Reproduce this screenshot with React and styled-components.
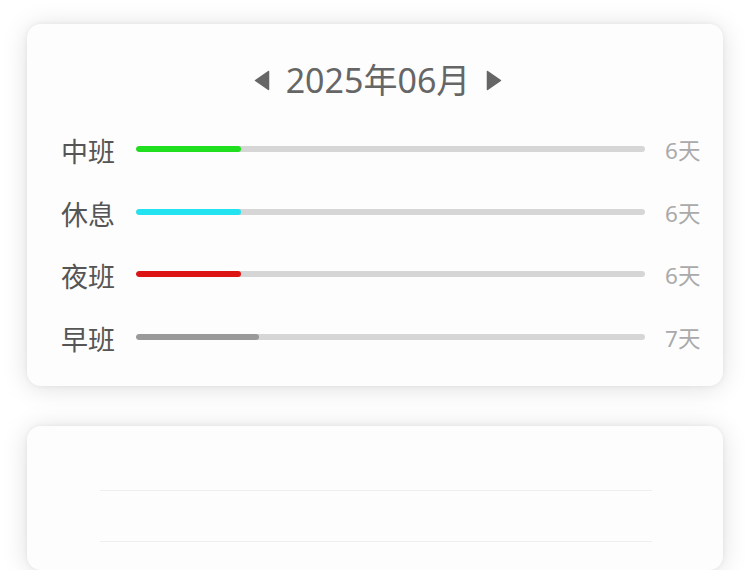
import React from "react";
import styled, { createGlobalStyle } from "styled-components";

const Global = createGlobalStyle`
  html, body { margin: 0; padding: 0; background: #ffffff; }
  body { font-family: "Noto Sans", "Noto Sans CJK SC", sans-serif; }
`;

const Page = styled.div`
  display: flex;
  flex-direction: column;
  gap: 40px;
  padding: 24px 27px 0 27px;
  height: 570px;
  box-sizing: border-box;
  overflow: hidden;
`;

const Card = styled.div`
  background: #fdfdfd;
  border-radius: 14px;
  box-shadow: 0 2px 26px rgba(0, 0, 0, 0.13), 0 0 5px rgba(0, 0, 0, 0.06);
  box-sizing: border-box;
`;

const StatsCard = styled(Card)`
  padding: 36px 22px 18px 34px;
  display: flex;
  flex-direction: column;
`;

const MonthBar = styled.div`
  display: flex;
  align-items: center;
  justify-content: center;
  gap: 16px;
  height: 40px;
  margin-bottom: 18px;
  margin-right: 6px;
`;

const Arrow = styled.button`
  border: none;
  background: none;
  padding: 0;
  display: flex;
  align-items: center;
  cursor: pointer;
  color: #666;
`;

const MonthText = styled.div`
  font-family: "Noto Sans", "Noto Sans CJK SC", sans-serif;
  font-size: 34px;
  line-height: 40px;
  color: #666;
`;

const Row = styled.div`
  display: flex;
  align-items: center;
  height: 62.5px;
`;

const Label = styled.div`
  width: 54px;
  margin-right: 21px;
  font-family: "Noto Sans CJK SC", sans-serif;
  font-size: 27px;
  line-height: 32px;
  color: #555;
  transform: translateY(2px);
  flex-shrink: 0;
`;

const Track = styled.div`
  flex: 1;
  height: 6px;
  border-radius: 3px;
  background: #d6d6d6;
  overflow: hidden;
`;

const Fill = styled.div`
  height: 100%;
  border-radius: 3px;
  background: ${(p) => p.$color};
`;

const Value = styled.div`
  margin-left: 20px;
  width: 36px;
  font-family: "Noto Sans", "Noto Sans CJK SC", sans-serif;
  font-size: 22.5px;
  line-height: 26px;
  color: #aaa;
  transform: translateY(2px);
  flex-shrink: 0;
  white-space: nowrap;
`;

const ChartCard = styled(Card)`
  height: 300px;
  padding: 64px 71px 0 73px;
  display: flex;
  flex-direction: column;
  gap: 50px;
`;

const GridLine = styled.div`
  height: 1px;
  background: #efefef;
`;

const Tri = ({ dir }) => (
  <svg width="16" height="21" viewBox="0 0 16 21">
    <polygon
      points={dir === "left" ? "14.5,1.5 14.5,19.5 1.5,10.5" : "1.5,1.5 1.5,19.5 14.5,10.5"}
      fill="#666"
      stroke="#666"
      strokeWidth="1.5"
      strokeLinejoin="round"
    />
  </svg>
);

const data = [
  { name: "中班", days: 6, color: "#1fdf1f" },
  { name: "休息", days: 6, color: "#22e3ef" },
  { name: "夜班", days: 6, color: "#dc1414" },
  { name: "早班", days: 7, color: "#9a9a9a" },
];

export default function App() {
  return (
    <>
      <Global />
      <Page>
        <StatsCard>
          <MonthBar>
            <Arrow aria-label="上个月">
              <Tri dir="left" />
            </Arrow>
            <MonthText>2025年06月</MonthText>
            <Arrow aria-label="下个月">
              <Tri dir="right" />
            </Arrow>
          </MonthBar>
          {data.map((d) => (
            <Row key={d.name}>
              <Label>{d.name}</Label>
              <Track>
                <Fill $color={d.color} style={{ width: `${(d.days / 29) * 100}%` }} />
              </Track>
              <Value>{d.days}天</Value>
            </Row>
          ))}
        </StatsCard>
        <ChartCard>
          <GridLine />
          <GridLine />
        </ChartCard>
      </Page>
    </>
  );
}
